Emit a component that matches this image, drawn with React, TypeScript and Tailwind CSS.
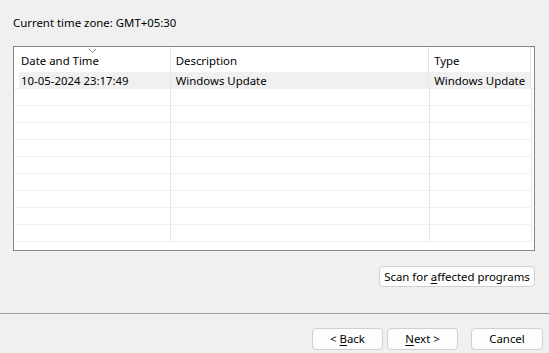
const font = { fontFamily: '"Noto Sans", "Open Sans", sans-serif' };

const rows = [
  { date: "10-05-2024 23:17:49", desc: "Windows Update", type: "Windows Update" },
];

const emptyRows = 9;

const Button = ({ children, className }: { children: React.ReactNode; className: string }) => (
  <button
    className={
      "flex items-center justify-center rounded-[4px] border border-[#d0d0d0] bg-[#fdfdfd] text-[11.4px] leading-none text-black " +
      className
    }
  >
    {children}
  </button>
);

const SortArrow = () => (
  <svg width="9" height="6" viewBox="0 0 9 6" className="absolute left-[74px] top-[1px]">
    <path d="M1 1 L4.5 4.5 L8 1" fill="none" stroke="#8c8c8c" strokeWidth="1" />
  </svg>
);

export default function App() {
  return (
    <div
      className="flex h-[353px] w-[549px] flex-col bg-[#f0f0f0] text-[11.4px] text-black"
      style={font}
    >
      <div className="px-[13px] pt-[13px]">
        <div className="h-[18px] pt-[2px] leading-[16px]">Current time zone: GMT+05:30</div>

        {/* Liste des événements */}
        <div className="mt-[15px] h-[205px] w-[522px] border border-[#828790] bg-white">
          <div className="flex h-[25px] pr-[3px]">
            <div className="relative flex w-[157px] items-center border-r border-[#e5e5e5] pl-[7px] pt-[2px]">
              <SortArrow />
              Date and Time
            </div>
            <div className="flex w-[259px] items-center border-r border-[#e5e5e5] pl-[5px] pt-[2px]">
              Description
            </div>
            <div className="flex w-[102px] items-center border-r border-[#e5e5e5] pl-[5px] pt-[2px]">
              Type
            </div>
          </div>

          {rows.map((r) => (
            <div key={r.date} className="flex h-[17px] border-b border-[#f0f0f0] pr-[3px]">
              <div className="flex w-[157px] border-r border-[#e5e5e5]">
                <div className="ml-[5px] flex flex-1 items-center bg-[#f0f0f0] pl-[2px] pt-[1px]">{r.date}</div>
              </div>
              <div className="flex w-[259px] items-center border-r border-[#e5e5e5] bg-[#f0f0f0] pl-[5px] pt-[1px]">
                {r.desc}
              </div>
              <div className="flex w-[102px] items-center border-r border-[#e5e5e5] bg-[#f0f0f0] pl-[5px] pt-[1px]">
                {r.type}
              </div>
            </div>
          ))}

          {Array.from({ length: emptyRows }).map((_, i) => (
            <div key={i} className="flex h-[17px] pr-[3px]">
              <div className="ml-[1px] flex flex-1 border-b border-[#f0f0f0]">
                <div className="w-[156px] border-r border-[#e5e5e5]" />
                <div className="w-[259px] border-r border-[#e5e5e5]" />
                <div className="w-[102px] border-r border-[#e5e5e5]" />
              </div>
            </div>
          ))}
        </div>

        <div className="mt-[15px] flex justify-end pr-[1px]">
          <Button className="h-[21px] w-[156px]">
            <span>
              Scan for <span className="underline underline-offset-2">a</span>ffected programs
            </span>
          </Button>
        </div>
      </div>

      <div className="mt-[26px] border-t border-[#a0a0a0]" />

      {/* Boutons */}
      <div className="mt-[14px] flex justify-end gap-[4px] pr-[6px]">
        <Button className="h-[22px] w-[71px]">
          <span>
            &lt; <span className="underline underline-offset-2">B</span>ack
          </span>
        </Button>
        <Button className="h-[22px] w-[71px]">
          <span>
            <span className="underline underline-offset-2">N</span>ext &gt;
          </span>
        </Button>
        <Button className="ml-[9px] h-[22px] w-[72px]">Cancel</Button>
      </div>
    </div>
  );
}
